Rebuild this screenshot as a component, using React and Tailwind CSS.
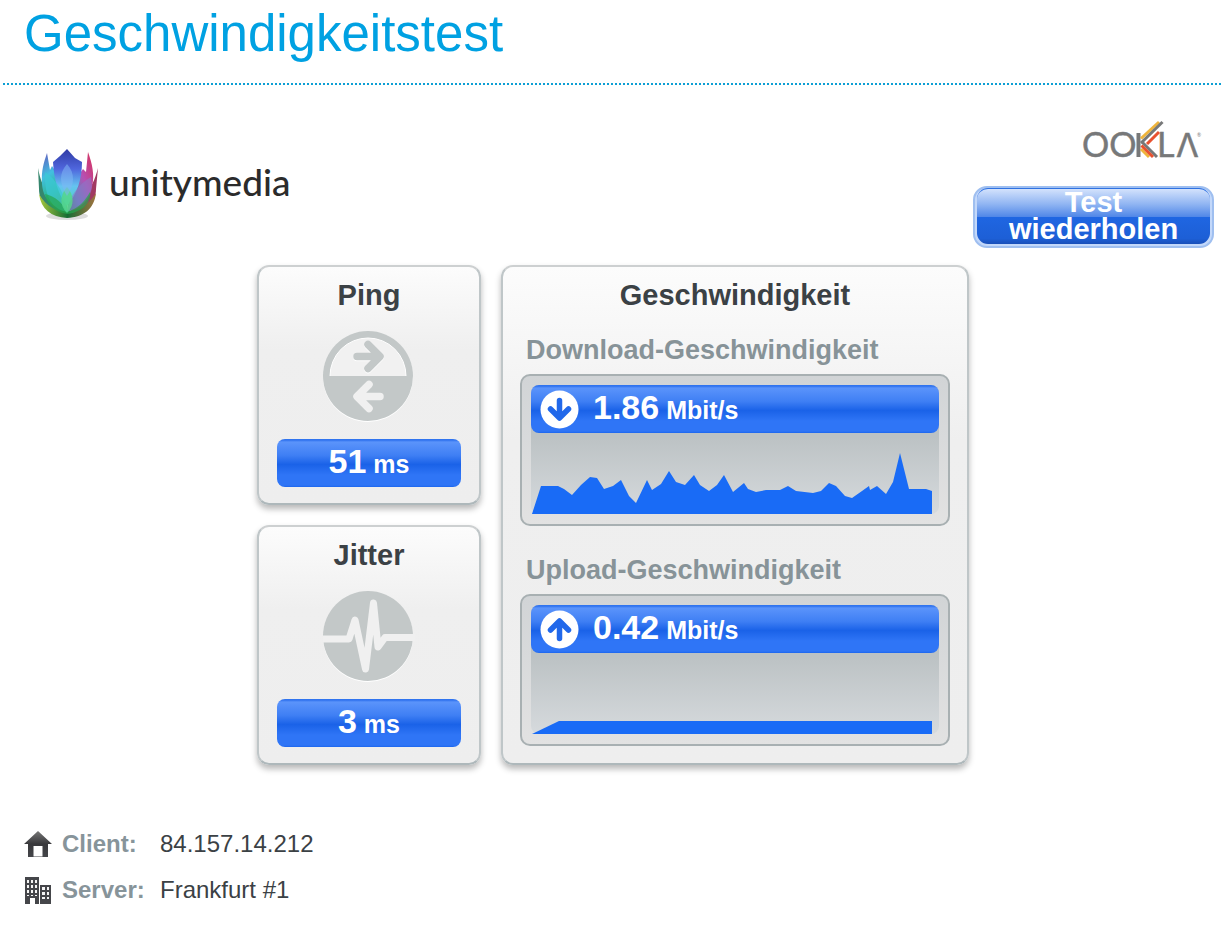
import React from 'react';

const downloadPoints =
  '1,81 10,53 27,53 33,56 41,62 50,52 59,44 66,45 73,56 82,53 90,47 98,63 105,70 116,47 121,57 130,51 138,38 145,49 154,52 163,42 169,52 178,58 186,52 193,42 202,59 213,50 217,56 225,59 235,57 249,57 257,53 265,58 282,60 290,58 298,50 305,53 314,63 321,65 331,58 338,53 339,57 346,53 355,61 362,49 369,20 378,56 395,56 401,58 401,81';
const uploadPoints = '1,81 28,68 401,68 401,81';

const App = () => (
  <div className="min-h-screen bg-white font-['Liberation_Sans',Arial,sans-serif] text-[#3b4145]">
    <header className="ml-[3px] border-b-2 border-dotted border-[#0c9fd4] pt-1 pb-5 pl-[21px]">
      <h1 className="text-[51px] leading-[59px] text-[#00a1e2]">Geschwindigkeitstest</h1>
    </header>

    <main className="pl-[5px]">
      <div className="flex items-start justify-between pt-[33px] pr-[7px] pb-[17px] pl-7">
        <div className="flex items-center gap-2 pt-7">
          <LotusLogo />
          <span className="pb-1 font-['Lato',sans-serif] text-[37px] leading-10 font-medium text-[#2b2b2b]">unitymedia</span>
        </div>
        <div className="flex flex-col items-end gap-4">
          <OoklaLogo />
          <button
            type="button"
            className="w-[241px] rounded-[14px] border-2 border-[#9fbff0] bg-[#c3d8fa] px-0.5 pb-0.5 text-[29px] leading-[27px] font-bold text-white"
          >
            <span className="block rounded-[11px] border-t border-[#2f72e2] bg-[linear-gradient(#d3e2fc_0%,#8fb4f2_28%,#5288e8_50%,#1f66e2_51%,#1d5fd6_90%,#194fb8_100%)] px-8 pb-px">
              Test wiederholen
            </span>
          </button>
        </div>
      </div>

      {/* Results */}
      <div className="mx-auto grid max-w-[712px] grid-cols-[224fr_468fr] gap-5">
        <div className="flex flex-col gap-5">
          <Card title="Ping">
            <PingIcon />
            <ValueBar value="51" unit="ms" />
          </Card>
          <Card title="Jitter">
            <JitterIcon />
            <ValueBar value="3" unit="ms" />
          </Card>
        </div>

        <section className={`${cardStyle} px-[17px] pb-[17px]`}>
          <h2 className="text-center text-[29px] leading-8 font-bold">Geschwindigkeit</h2>
          <SpeedPanel title="Download-Geschwindigkeit" value="1.86" points={downloadPoints} className="mt-[23px]" />
          <SpeedPanel title="Upload-Geschwindigkeit" value="0.42" points={uploadPoints} up className="mt-7" />
        </section>
      </div>

      <dl className="mt-[63px] flex flex-col gap-[14px] pl-[19px] text-2xl leading-8">
        <InfoRow icon={<HomeIcon />} label="Client:" value="84.157.14.212" />
        <InfoRow icon={<BuildingIcon />} label="Server:" value="Frankfurt #1" />
      </dl>
    </main>
  </div>
);

const cardStyle =
  'rounded-xl border-2 border-t-[#cdd0d1] border-x-[#bfc6c8] border-b-[#aeb8bb] bg-[linear-gradient(#fcfcfc,#efefef_35%,#eeeeee)] pt-3 shadow-[0_4px_6px_rgba(0,0,0,0.28)]';

const barStyle =
  'h-12 rounded-lg bg-[linear-gradient(#2b71ee_0%,#3d7cf2_4%,#5b94fb_6%,#3f7ff4_34%,#1a62e8_53%,#2f75f6_75%,#2f75f6_96%,#1c66ee_100%)] font-bold text-white';

const Card = ({ title, children }) => (
  <section className={`${cardStyle} flex flex-col items-center px-[18px] pb-4`}>
    <h2 className="mb-5 text-[29px] leading-8 font-bold">{title}</h2>
    {children}
  </section>
);

const ValueBar = ({ value, unit }) => (
  <p className={`${barStyle} mt-[17px] w-full text-center text-[25px] leading-[44px]`}>
    <span className="text-[34px]">{value}</span> {unit}
  </p>
);

const SpeedPanel = ({ title, value, points, up, className }) => (
  <div className={className}>
    <h3 className="ml-1.5 text-[27px] leading-8 font-bold text-[#879398]">{title}</h3>
    <div className="mt-2 rounded-[10px] border-2 border-[#a8b0b2] bg-[linear-gradient(#d1d4d6,#e2e2e2)] p-[9px] pb-2.5">
      <div className="rounded-lg bg-[linear-gradient(#bcc2c4_40%,#d6dadd)]">
        <div className={`${barStyle} flex items-center gap-[14px] pl-[9px]`}>
          <ArrowIcon up={up} />
          <p className="pb-0.5 text-[25px] leading-[44px]">
            <span className="text-[34px]">{value}</span> Mbit/s
          </p>
        </div>
        <svg viewBox="0 0 408 81" preserveAspectRatio="none" className="block h-[81px] w-full" aria-hidden="true">
          <polygon points={points} fill="#196bf6" />
        </svg>
      </div>
    </div>
  </div>
);

const InfoRow = ({ icon, label, value }) => (
  <div className="flex items-center">
    <span className="mr-2.5">{icon}</span>
    <dt className="w-[98px] font-bold text-[#87949a]">{label}</dt>
    <dd>{value}</dd>
  </div>
);

const ArrowIcon = ({ up }) => (
  <svg width="39" height="39" viewBox="0 0 39 39" className={up ? 'rotate-180' : ''} aria-hidden="true">
    <circle cx="19.5" cy="19.5" r="19" fill="#fff" />
    <path d="M19.5 10.5V27M10.500 19L19.5 28L28.500 19" fill="none" stroke="#2168ea" strokeWidth="5.500" strokeLinecap="round" strokeLinejoin="round" />
  </svg>
);

const PingIcon = () => (
  <svg width="92" height="91" viewBox="0 0 92 91" fill="none" aria-hidden="true">
    <circle cx="45" cy="46" r="45" fill="#fff" />
    <circle cx="45" cy="45" r="45" fill="#c3c8c8" />
    <path d="M7 45a38 38 0 0 1 76 0Z" fill="#f1f1f1" />
    <path d="M7 45a38 38 0 0 1 76 0" stroke="#fff" />
    <g strokeWidth="7.500" strokeLinecap="round" strokeLinejoin="round">
      <path d="M34 26.500H56M45 14.500L57 26.500L45 38.500" stroke="#fff" />
      <path d="M34 25.500H56M45 13.500L57 25.500L45 37.500" stroke="#c3c8c8" />
      <path d="M57 65.500H35M46 53.500L34 65.500L46 77.500" stroke="#f0f0f0" />
    </g>
  </svg>
);

const JitterIcon = () => (
  <svg width="92" height="91" viewBox="0 0 92 91" fill="none" aria-hidden="true">
    <circle cx="45" cy="46" r="45" fill="#fff" />
    <circle cx="45" cy="45" r="45" fill="#c3c8c8" />
    <path
      d="M-1 48H26L32 29L42.500 78L50.500 12L55 56L62 46.500H92"
      stroke="#f0f0f0"
      strokeWidth="7"
      strokeLinejoin="round"
    />
  </svg>
);

const HomeIcon = () => (
  <svg width="28" height="28" viewBox="0 0 28 28" aria-hidden="true">
    <defs>
      <linearGradient id="roof" x1="0" y1="0" x2="0" y2="1">
        <stop offset="0" stopColor="#777" />
        <stop offset="0.500" stopColor="#38383b" />
        <stop offset="1" stopColor="#45464a" />
      </linearGradient>
    </defs>
    <path d="M14 1L0 14H4V27H24V14H28Z" fill="url(#roof)" />
    <path d="M9.500 16H18.500V26.500H9.500Z" fill="#fff" />
  </svg>
);

const BuildingIcon = () => (
  <svg width="28" height="28" viewBox="0 0 28 28" aria-hidden="true">
    <path d="M1 1H15V28H11V22H6V28H1Z M16 9H27V28H16Z" fill="#45464a" />
    <path
      d="M3 4h2v3H3zM7 4h2v3H7zM11 4h2v3h-2zM3 9h2v3H3zM7 9h2v3H7zM11 9h2v3h-2zM3 14h2v3H3zM7 14h2v3H7zM11 14h2v3h-2zM3 19h2v1H3zM7 19h2v1H7zM11 19h2v1h-2zM18 11h3v3h-3zM23 11h2v3h-2zM18 16h3v3h-3zM23 16h2v3h-2zM18 21h3v2h-3zM23 21h2v2h-2z"
      fill="#f5f5f5"
    />
  </svg>
);

// The K is made of striped bars, the remaining letters are plain text
const OoklaLogo = () => (
  <svg width="134" height="52" viewBox="0 0 134 52" role="img" aria-label="OOKLA">
    <g fill="none" strokeWidth="3">
      <path d="M58.500 15V39" stroke="#777879" strokeWidth="4" />
      <path d="M61 20.500L79 4" stroke="#efb43c" />
      <path d="M61 25L82.500 4" stroke="#777879" />
      <path d="M67 26L79 14" stroke="#e8512f" />
      <path d="M61 31L69 39" stroke="#efb43c" />
      <path d="M62 24L77 39" stroke="#777879" />
      <path d="M61.500 27.500L73 39" stroke="#e8512f" />
    </g>
    <g fill="#777879" stroke="#777879" strokeWidth="0.500" fontFamily="Lato, sans-serif" fontSize="34">
      <text x="2" y="39">OO</text>
      <text x="77" y="39">L</text>
      <text x="96" y="39" fontFamily="Inter, sans-serif" fontSize="33">Λ</text>
      <text x="117" y="19" fontSize="5" stroke="none">®</text>
    </g>
  </svg>
);

const LotusLogo = () => (
  <svg width="68" height="76" viewBox="0 0 68 76" aria-hidden="true">
    <defs>
      <linearGradient id="center" x1="0" y1="0" x2="0" y2="1">
        <stop offset="0" stopColor="#303ba4" />
        <stop offset="0.350" stopColor="#4f66dd" />
        <stop offset="0.650" stopColor="#65c3f0" />
        <stop offset="1" stopColor="#48d5c0" />
      </linearGradient>
      <linearGradient id="left" x1="0" y1="0" x2="0.300" y2="1">
        <stop offset="0" stopColor="#6258be" />
        <stop offset="0.400" stopColor="#43bfe0" />
        <stop offset="0.750" stopColor="#2ab691" />
        <stop offset="1" stopColor="#479c28" />
      </linearGradient>
      <linearGradient id="right" x1="1" y1="0" x2="0" y2="1">
        <stop offset="0" stopColor="#d92e55" />
        <stop offset="0.400" stopColor="#b650b4" />
        <stop offset="0.700" stopColor="#5288bc" />
        <stop offset="1" stopColor="#209348" />
      </linearGradient>
      <linearGradient id="base">
        <stop offset="0" stopColor="#a7c83d" />
        <stop offset="0.500" stopColor="#176d35" />
        <stop offset="1" stopColor="#a2733f" />
      </linearGradient>
    </defs>
    <ellipse cx="34" cy="70" rx="21" ry="4" fill="#ddd" />
    <path d="M5 22C7 33 10 41 17 49L34 69C17 70 6 57 6 43Z" fill="#35866d" />
    <path d="M65 22C62 34 58 42 51 49L34 69C52 70 63 57 63 43Z" fill="#a13962" />
    <path d="M6 48C14 62 24 65 34 65S55 60 63 47C61 63 51 71 34 72C18 71 8 63 6 48Z" fill="url(#base)" />
    <path d="M14 7C11 16 8 25 9 38S17 61 34 66C35 47 26 30 19 20L17 24Z" fill="url(#left)" />
    <path d="M55 6C59 17 62 29 59 41S49 61 34 66C35 48 43 32 50 23L53 26Z" fill="url(#right)" />
    <path d="M20 16C21 34 25 48 34 60C44 48 49 33 49 16L42 12L34 3L27 10Z" fill="url(#center)" />
    <path d="M12 26C24 34 33 49 34 66C20 63 11 53 12 26Z" fill="#3cc8d4" opacity="0.750" />
    <path d="M58 31C46 38 36 50 34 66C48 62 58 54 59 40Z" fill="#8a78c8" opacity="0.600" />
    <path d="M12 48C22 50 30 57 34 66C46 62 52 55 57 46C59 58 46 67 34 68C22 66 13 58 12 48Z" fill="#25a64e" opacity="0.700" />
    <path d="M34 41C27 49 26 59 34 67C42 59 41 49 34 41Z" fill="#55d68c" opacity="0.850" />
    <path d="M34 18C26 27 26 37 34 50C42 38 42 27 34 18Z" fill="#80b6f4" opacity="0.550" />
  </svg>
);

export default App;
